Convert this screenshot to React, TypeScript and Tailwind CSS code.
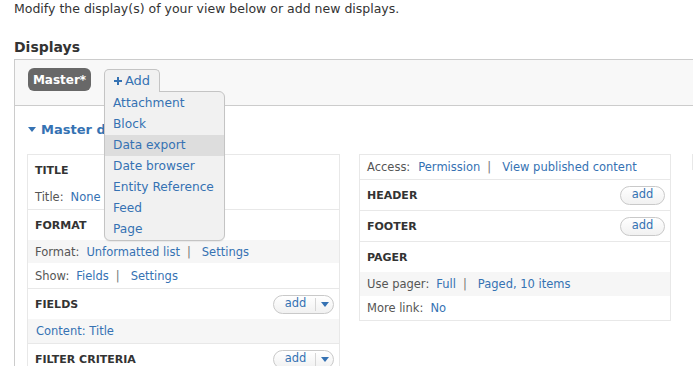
import type { ReactNode } from 'react'

const link = 'text-[#3572b3]'

function Caret({ className = '' }: { className?: string }) {
  return (
    <svg className={className} width="8" height="5" viewBox="0 0 8 5">
      <path d="M0 0h8L4 5z" fill="currentColor" />
    </svg>
  )
}

function AddButton({ split = false }: { split?: boolean }) {
  return (
    <div
      className={`flex h-[19px] items-center rounded-full border border-[#c9c9c9] bg-gradient-to-b from-white to-[#f1f1f1] text-[11.5px] ${link} ${
        split ? 'w-[61px]' : 'w-[45px] justify-center'
      }`}
    >
      {split ? (
        <>
          <span className="w-[41px] pl-[2px] text-center">add</span>
          <span className="h-[13px] w-px bg-[#d6d6d6]" />
          <span className="flex flex-1 justify-center">
            <Caret />
          </span>
        </>
      ) : (
        <span>add</span>
      )}
    </div>
  )
}

function Header({ title, action, h = 'h-[30px]' }: { title: string; action?: ReactNode; h?: string }) {
  return (
    <div className={`flex ${h} items-center justify-between pl-[7px] pr-[5px]`}>
      <span className="pt-[2px] text-[11px] font-bold text-[#333]">{title}</span>
      {action}
    </div>
  )
}

function Row({ children, shaded = false, h = 'h-[24px]' }: { children: ReactNode; shaded?: boolean; h?: string }) {
  return (
    <div className={`flex ${h} items-center pl-[7px] pt-[2px] text-[11.5px] text-[#555] ${shaded ? 'bg-[#f6f6f6]' : ''}`}>
      {children}
    </div>
  )
}

function Sep() {
  return <span className="ml-[7px] mr-[11px] text-[#777]">|</span>
}

const menuItems = ['Attachment', 'Block', 'Data export', 'Date browser', 'Entity Reference', 'Feed', 'Page']

export default function App() {
  return (
    <div className="h-[366px] w-[693px] overflow-hidden bg-white font-['DejaVu_Sans',sans-serif] text-[#333]">
      <div className="w-[900px] pl-[14px]">
        <p className="text-[12.5px] leading-[17px]">Modify the display(s) of your view below or add new displays.</p>
        <h2 className="mt-[21px] text-[14px] font-bold leading-[18px]">Displays</h2>

        <div className="mt-[3px] border-l border-t border-[#cccccc]">
          {/* display tabs */}
          <div className="relative h-[46px] border-b border-[#cccccc] bg-[#f8f8f8] pl-[13px] pt-[8px]">
            <div className="flex h-[23px] w-[63px] items-center justify-center rounded-[6px] bg-[#686868] text-[12px] font-bold text-white">
              Master*
            </div>

            <div className="absolute left-[89px] top-[9px] z-20">
              <div className="relative z-10 flex h-[23px] w-[56px] items-center justify-center gap-[3px] rounded-t-[5px] border border-b-0 border-[#c4c4c4] bg-[#f1f1f1] text-[13px] text-[#3572b3]">
                <svg width="8" height="8" viewBox="0 0 8 8">
                  <path d="M3 0h2v3h3v2H5v3H3V5H0V3h3z" fill="currentColor" />
                </svg>
                <span>Add</span>
              </div>
              <div className="relative -mt-px w-[121px] rounded-b-[6px] rounded-tr-[6px] border border-[#c4c4c4] bg-[#f1f1f1] pt-px shadow-[0_1px_1px_rgba(0,0,0,0.06)]">
                {menuItems.map((item) => (
                  <div
                    key={item}
                    className={`flex h-[21px] items-center pl-[8px] text-[12.2px] text-[#3572b3] ${
                      item === 'Data export' ? 'bg-[#dddddd]' : ''
                    }`}
                  >
                    {item}
                  </div>
                ))}
              </div>
            </div>
          </div>

          {/* display details */}
          <div className="pl-[12px] pt-[15px]">
            <div className="flex h-[16px] items-center gap-[5px] pl-[1px] pt-px text-[13px] font-bold text-[#3572b3]">
              <Caret />
              <span>Master details</span>
            </div>

            <div className="mt-[17px] flex items-start">
              {/* left column */}
              <div className="w-[313px] border border-b-0 border-[#e8e8e8]">
                <Header title="TITLE" />
                <Row>
                  <span>Title:</span>
                  <span className={`ml-[7px] ${link}`}>None</span>
                </Row>
                <div className="border-t border-[#e8e8e8]">
                  <Header title="FORMAT" />
                  <Row shaded h="h-[23px]">
                    <span>Format:</span>
                    <span className={`ml-[7px] ${link}`}>Unformatted list</span>
                    <Sep />
                    <span className={link}>Settings</span>
                  </Row>
                  <Row h="h-[25px]">
                    <span>Show:</span>
                    <span className={`ml-[7px] ${link}`}>Fields</span>
                    <Sep />
                    <span className={link}>Settings</span>
                  </Row>
                </div>
                <div className="border-t border-[#e8e8e8]">
                  <Header title="FIELDS" action={<AddButton split />} />
                  <Row shaded>
                    <span className={`pl-px ${link}`}>Content: Title</span>
                  </Row>
                </div>
                <div className="border-t border-[#e8e8e8]">
                  <Header title="FILTER CRITERIA" action={<AddButton split />} />
                </div>
              </div>

              {/* right column */}
              <div className="ml-[19px] w-[312px] border border-[#e8e8e8]">
                <Row>
                  <span>Access:</span>
                  <span className={`ml-[8px] ${link}`}>Permission</span>
                  <Sep />
                  <span className={link}>View published content</span>
                </Row>
                <div className="border-t border-[#e8e8e8]">
                  <Header title="HEADER" action={<AddButton />} />
                </div>
                <div className="border-t border-[#e8e8e8]">
                  <Header title="FOOTER" action={<AddButton />} />
                </div>
                <div className="border-t border-[#e8e8e8]">
                  <Header title="PAGER" />
                  <Row shaded>
                    <span>Use pager:</span>
                    <span className={`ml-[7px] ${link}`}>Full</span>
                    <Sep />
                    <span className={link}>Paged, 10 items</span>
                  </Row>
                  <Row>
                    <span>More link:</span>
                    <span className={`ml-[7px] ${link}`}>No</span>
                  </Row>
                </div>
              </div>

              {/* third column, mostly off screen */}
              <div className="ml-[21px] h-[16px] w-[200px] border-l border-t border-[#e8e8e8]" />
            </div>
          </div>
        </div>
      </div>
    </div>
  )
}
